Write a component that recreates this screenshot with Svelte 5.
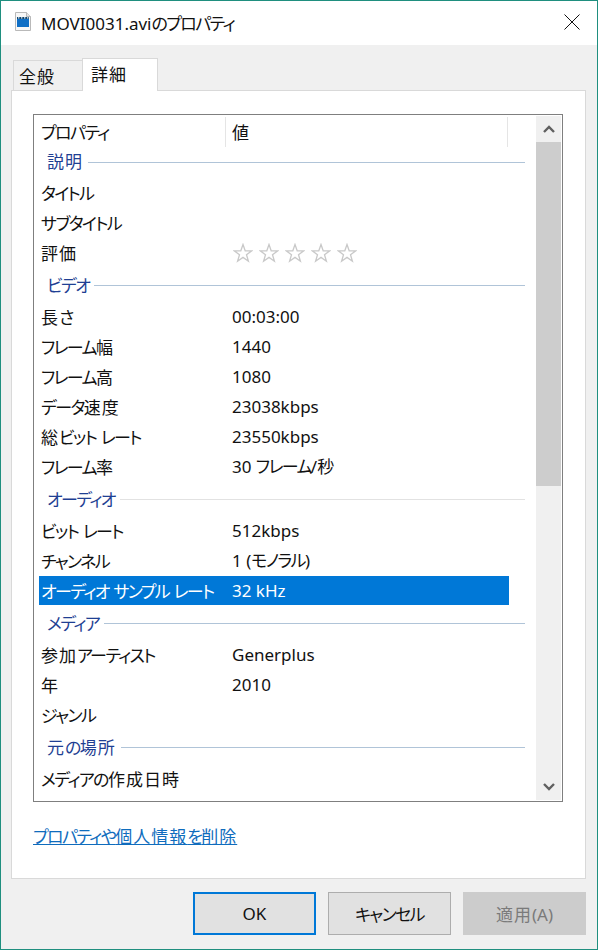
<script>
  const groups = [
    { name: '説明', h: 31, first: true, lineClass: 'blue', rows: [['タイトル', ''], ['サブタイトル', ''], ['評価', '*']] },
    { name: 'ビデオ', h: 34, lineClass: 'blue', rows: [['長さ', '00:03:00'], ['フレーム幅', '1440'], ['フレーム高', '1080'], ['データ速度', '23038kbps'], ['総ビット レート', '23550kbps'], ['フレーム率', '30 フレーム/秒']] },
    { name: 'オーディオ', h: 34, lineClass: 'pale', rows: [['ビット レート', '512kbps'], ['チャンネル', '1 (モノラル)'], ['オーディオ サンプル レート', '32 kHz', true]] },
    { name: 'メディア', h: 34, lineClass: 'blue', rows: [['参加アーティスト', 'Generplus'], ['年', '2010'], ['ジャンル', '']] },
    { name: '元の場所', h: 34, lineClass: 'blue', rows: [['メディアの作成日時', '']] }
  ];
  // Windows' UI font sets kana tighter and kanji wider than the fallback CJK face.
  function segments(text) {
    return (text.match(/[\u3040-\u30ff]+|[\u4e00-\u9fff]+|[^\u3040-\u30ff\u4e00-\u9fff]+/g) || []).map((t) => ({
      t,
      cls: /^[\u3040-\u30ff]/.test(t) ? 'kana' : /^[\u4e00-\u9fff]/.test(t) ? 'kanji' : 'latin'
    }));
  }
</script>

{#snippet jp(text)}{#each segments(text) as s}<span class={s.cls}>{s.t}</span>{/each}{/snippet}

<div class="window">
  <header class="titlebar">
    <svg class="fileicon" width="17" height="20" viewBox="0 0 17 20">
      <path d="M0.5 0.5H11.5L15.5 4.5V18.5H0.5Z" fill="#f7f7f7" stroke="#b9b9b9"/>
      <path d="M11.5 0.5V4.5H15.5" fill="#e4e4e4" stroke="#b9b9b9"/>
      <rect x="2" y="7" width="12" height="8" fill="#0f6fc6"/>
      <path d="M2 5h12v2H2z" fill="#12476f"/>
      <path d="M3 5.2h1.4v1.4H3zM6 5.2h1.4v1.4H6zM9 5.2h1.4v1.4H9zM12 5.2h1.4v1.4H12z" fill="#e8f2fa"/>
    </svg>
    <span class="title">{@render jp('MOVI0031.aviのプロパティ')}</span>
    <svg class="close" width="16" height="16" viewBox="0 0 16 16"><path d="M0.5 0.5L15.5 15.5M15.5 0.5L0.5 15.5" stroke="#111" fill="none"/></svg>
  </header>

  <main class="body">
    <nav class="tabs">
      <div class="tab">{@render jp('全般')}</div>
      <div class="tab active">{@render jp('詳細')}</div>
    </nav>
    <section class="panel">
      <div class="list">
        <div class="content">
          <div class="head">
            <div class="c1 hcell">{@render jp('プロパティ')}</div>
            <div class="c2 hcell">{@render jp('値')}</div>
          </div>
          {#each groups as g}
            <div class="group" class:first={g.first} style="height:{g.h}px">
              <span class="gname">{@render jp(g.name)}</span>
              <span class="gline {g.lineClass}"></span>
            </div>
            {#each g.rows as r}
              <div class="row" class:sel={r[2]}>
                <div class="c1">{@render jp(r[0])}</div>
                <div class="c2">
                  {#if r[1] === '*'}
                    <span class="stars">
                      {#each [0, 1, 2, 3, 4] as i}
                        <svg width="20" height="20" viewBox="0 0 20 20"><path d="M10 1.5L12.2 7.8H18.8L13.5 11.8L15.4 18.2L10 14.4L4.6 18.2L6.5 11.8L1.2 7.8H7.8Z" fill="none" stroke="#c9c9c9" stroke-width="1.3"/></svg>
                      {/each}
                    </span>
                  {:else}<span class="val">{@render jp(r[1])}</span>{/if}
                </div>
              </div>
            {/each}
          {/each}
        </div>
        <div class="scrollbar">
          <div class="arrow">
            <svg width="12" height="8" viewBox="0 0 12 8"><path d="M1 7L6 2L11 7" fill="none" stroke="#606060" stroke-width="2.4"/></svg>
          </div>
          <div class="thumb"></div>
          <div class="track"></div>
          <div class="arrow">
            <svg width="12" height="8" viewBox="0 0 12 8"><path d="M1 1L6 6L11 1" fill="none" stroke="#606060" stroke-width="2.4"/></svg>
          </div>
        </div>
      </div>
      <a class="link" href="#top">{@render jp('プロパティや個人情報を削除')}</a>
    </section>
    <footer class="buttons">
      <button class="btn primary">OK</button>
      <button class="btn">{@render jp('キャンセル')}</button>
      <button class="btn disabled">{@render jp('適用(A)')}</button>
    </footer>
  </main>
</div>

<style>
  :global(body) { margin: 0; background: #fff; }
  .kana { letter-spacing: -1.6px; }
  .kanji { letter-spacing: 1px; }
  .window {
    width: 598px; height: 950px; box-sizing: border-box;
    border: 1px solid #1f8f7f; display: flex; flex-direction: column;
    font-family: "Noto Sans", "Noto Sans CJK JP", sans-serif; font-size: 17px; color: #111; overflow: hidden;
    font-feature-settings: "palt";
  }
  .titlebar { height: 44px; background: #fff; display: flex; align-items: center; padding: 0 17px 0 14px; flex: none; }
  .fileicon { flex: none; margin-right: 9px; margin-top: -2px; }
  .title { flex: 1; font-size: 17px; margin-top: -2px; }
  .close { margin-top: -2px; }
  .body { flex: 1; background: #f0f0f0; display: flex; flex-direction: column; padding: 0 11px 0 10px; }
  .tabs { display: flex; height: 45px; align-items: flex-end; padding-left: 2px; flex: none; position: relative; z-index: 1; }
  .tab { width: 70px; height: 30px; box-sizing: border-box; background: #f0f0f0; border: 1px solid #d9d9d9; border-bottom: none; padding-left: 5px; line-height: 32px; }
  .tab.active { width: 76px; height: 33px; background: #fff; margin-bottom: -1px; margin-left: -1px; padding-left: 8px; line-height: 31px; border-bottom: none; }
  .panel { height: 789px; box-sizing: border-box; background: #fff; border: 1px solid #d9d9d9; padding: 23px 21px 0; flex: none; }
  .list { height: 688px; box-sizing: border-box; border: 1px solid #7f7f7f; display: flex; padding: 1px; overflow: hidden; margin-right: 1px; }
  .content { flex: 1; padding: 1px 0 0 4px; overflow: hidden; }
  .head, .row { display: flex; height: 30px; align-items: center; width: 470px; white-space: nowrap; }
  .hcell { height: 30px; }
  .head .c1 { border-right: 1px solid #e5e5e5; }
  .head .c2 { border-right: 1px solid #e5e5e5; flex: none; width: 282px; padding-top: 2px; line-height: 28px; }
  .c1 { width: 187px; padding: 2px 0 0 2px; box-sizing: border-box; flex: none; line-height: 28px; }
  .c2 { padding-left: 6px; flex: 1; display: flex; align-items: center; height: 30px; box-sizing: border-box; line-height: 30px; }
  .row.sel { background: #0078d7; color: #fff; height: 29px; margin: 0 0 1px; }
  .group { display: flex; align-items: center; padding: 2px 0 0 8px; color: #1f3f93; width: 486px; box-sizing: border-box; }
  .group.first { padding: 0 0 2px 8px; }
  .gname { flex: none; margin-right: 5px; line-height: 20px; }
  .gline { flex: 1; height: 1px; margin-bottom: 2px; }
  .first .gline { margin: 2px 0 0; }
  .gline.blue { background: #b0c4d8; }
  .gline.pale { background: #e2e2e2; }
  .stars { display: flex; gap: 6px; margin-left: 1px; }
  .stars svg { display: block; }
  .scrollbar { width: 25px; display: flex; flex-direction: column; background: #f0f0f0; flex: none; }
  .arrow { height: 26px; display: flex; align-items: center; justify-content: center; flex: none; }
  .thumb { height: 344px; background: #cdcdcd; flex: none; }
  .track { flex: 1; }
  .link { display: block; margin-top: 24px; color: #0f6cbd; text-decoration: underline; line-height: 22px; }
  .buttons { display: flex; justify-content: flex-end; gap: 12px; padding-top: 13px; flex: none; }
  .btn { width: 123px; height: 43px; box-sizing: border-box; background: #e1e1e1; border: 1px solid #adadad; font: inherit; color: #111; padding: 0; font-feature-settings: "palt"; }
  .primary { border: 2px solid #0078d7; }
  .disabled { background: #cccccc; border-color: #cccccc; color: #7a7a7a; }
</style>
